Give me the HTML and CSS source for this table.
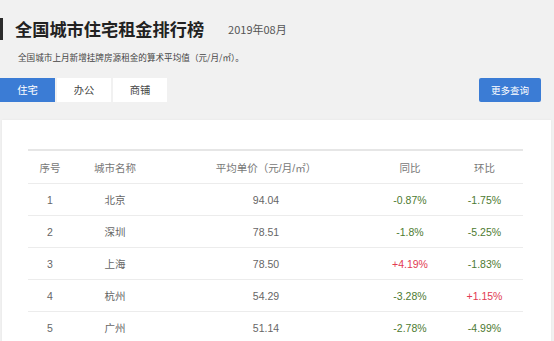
FILE: index.html
```html
<!DOCTYPE html>
<html lang="zh-CN">
<head>
<meta charset="utf-8">
<title>全国城市住宅租金排行榜</title>
<link rel="stylesheet" href="styles.css">
</head>
<body>
<div class="page">
  <div class="head">
    <h1 class="title">全国城市住宅租金排行榜</h1>
    <span class="date">2019年08月</span>
  </div>
  <p class="desc">全国城市上月新增挂牌房源租金的算术平均值（元/月/㎡）。</p>
  <div class="bar">
    <div class="tabs">
      <span class="tab active">住宅</span>
      <span class="tab">办公</span>
      <span class="tab">商铺</span>
    </div>
    <span class="more">更多查询</span>
  </div>
  <div class="card">
    <table class="rank">
      <colgroup>
        <col class="c1"><col class="c2"><col class="c3"><col class="c4"><col class="c5">
      </colgroup>
      <thead>
        <tr><th>序号</th><th>城市名称</th><th>平均单价（元/月/㎡）</th><th>同比</th><th>环比</th></tr>
      </thead>
      <tbody>
        <tr><td>1</td><td>北京</td><td>94.04</td><td class="dn">-0.87%</td><td class="dn">-1.75%</td></tr>
        <tr><td>2</td><td>深圳</td><td>78.51</td><td class="dn">-1.8%</td><td class="dn">-5.25%</td></tr>
        <tr><td>3</td><td>上海</td><td>78.50</td><td class="up">+4.19%</td><td class="dn">-1.83%</td></tr>
        <tr><td>4</td><td>杭州</td><td>54.29</td><td class="dn">-3.28%</td><td class="up">+1.15%</td></tr>
        <tr><td>5</td><td>广州</td><td>51.14</td><td class="dn">-2.78%</td><td class="dn">-4.99%</td></tr>
      </tbody>
    </table>
  </div>
</div>
</body>
</html>
```
FILE: styles.css
```css
html, body {
  margin: 0;
  padding: 0;
  background: #f1f1f1;
}
body {
  font-family: "Liberation Sans", "Noto Sans CJK SC", sans-serif;
  color: #333;
  overflow: hidden;
}
.page {
  padding-top: 18px;
}
.head {
  display: flex;
  align-items: center;
  height: 22px;
  border-left: 3px solid #2b2b2b;
  padding-left: 12px;
}
.title {
  margin: 0;
  font-family: "Noto Sans CJK SC", sans-serif;
  font-size: 17.2px;
  font-weight: 700;
  line-height: 22px;
  color: #222;
}
.date {
  margin-left: 24px;
  font-family: "Noto Sans CJK SC", sans-serif;
  font-size: 11px;
  color: #555;
  line-height: 22px;
}
.desc {
  margin: 10px 0 0 18px;
  font-family: "Noto Sans CJK SC", sans-serif;
  font-size: 8.6px;
  line-height: 14px;
  color: #444;
}
.bar {
  display: flex;
  justify-content: space-between;
  align-items: center;
  margin-top: 14px;
  padding-right: 13px;
}
.tabs {
  display: flex;
  gap: 2px;
}
.tab {
  width: 54px;
  height: 24px;
  line-height: 24px;
  text-align: center;
  background: #fff;
  font-family: "Noto Sans CJK SC", sans-serif;
  font-size: 10.3px;
  color: #444;
}
.tab.active {
  width: 55px;
  background: #3b7cd5;
  color: #fff;
}
.more {
  width: 62px;
  height: 24px;
  line-height: 24px;
  text-align: center;
  background: #3b7cd5;
  color: #fff;
  border-radius: 2px;
  font-family: "Noto Sans CJK SC", sans-serif;
  font-size: 9.5px;
}
.card {
  margin: 18px 3px 0 2px;
  background: #fff;
  padding: 29px 28px 0 26px;
  height: 240px;
  box-shadow: 0 0 2px rgba(0,0,0,0.06);
}
.rank {
  width: 495px;
  border-collapse: collapse;
  table-layout: fixed;
  border-top: 2px solid #e6e6e6;
  font-size: 10.5px;
  color: #666;
}
.c1 { width: 44px; }
.c2 { width: 86px; }
.c3 { width: 216px; }
.c4 { width: 72px; }
.c5 { width: 77px; }
.rank th, .rank td {
  height: 31px;
  padding: 0;
  text-align: center;
  border-bottom: 1px solid #ececec;
  font-weight: 400;
}
.rank th {
  height: 32px;
  color: #777;
}
.rank td.dn { color: #4d7a31; }
.rank td.up { color: #e23a52; }
```
